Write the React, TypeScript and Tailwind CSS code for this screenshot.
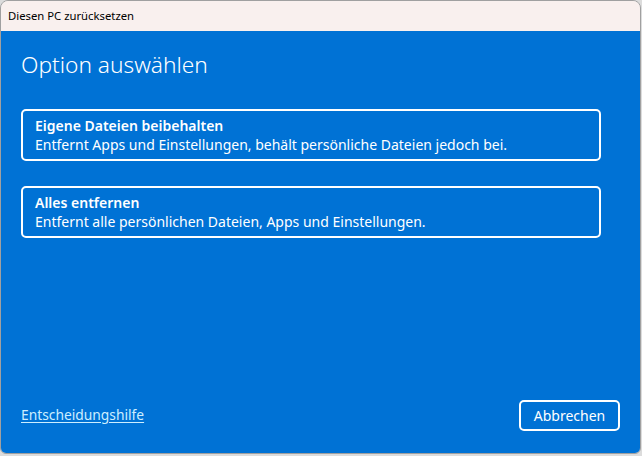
import React from 'react';

const options = [
  {
    title: 'Eigene Dateien beibehalten',
    text: 'Entfernt Apps und Einstellungen, behält persönliche Dateien jedoch bei.',
  },
  {
    title: 'Alles entfernen',
    text: 'Entfernt alle persönlichen Dateien, Apps und Einstellungen.',
  },
];

const App: React.FC = () => {
  return (
    <div className="w-[642px] h-[456px] bg-[#dcdcdc] overflow-hidden font-['Noto_Sans',sans-serif]">
      <div className="w-[641px] h-[454px] flex flex-col rounded-t-[8px] rounded-b-[6px] overflow-hidden border border-[#a0a0a0]">
        {/* Title bar */}
        <div className="h-[30px] shrink-0 bg-[#f9f0ee] flex items-center px-[7px] text-[11.3px] text-black">
          Diesen PC zurücksetzen
        </div>

        {/* Content */}
        <div className="flex-1 bg-[#0072d5] text-white flex flex-col px-[20px]">
          <h1 className="mt-[18px] text-[22.7px] font-light leading-[32px]">Option auswählen</h1>

          <div className="mt-[28px] flex flex-col gap-[25px]">
            {options.map((o) => (
              <button
                key={o.title}
                className="w-[580px] h-[52px] border-2 border-white rounded-[5px] text-left px-[12px] flex flex-col justify-center"
              >
                <span className="text-[14px] font-semibold leading-[19px]">{o.title}</span>
                <span className="text-[14px] leading-[20px]">{o.text}</span>
              </button>
            ))}
          </div>

          <div className="mt-auto mb-[22px] flex items-center justify-between">
            <a href="#" className="text-[13.8px] text-[#cdeeff] underline underline-offset-2">
              Entscheidungshilfe
            </a>
            <button className="w-[101px] h-[31px] border-2 border-white rounded-[5px] text-[14px]">
              Abbrechen
            </button>
          </div>
        </div>
      </div>
    </div>
  );
};

export default App;
